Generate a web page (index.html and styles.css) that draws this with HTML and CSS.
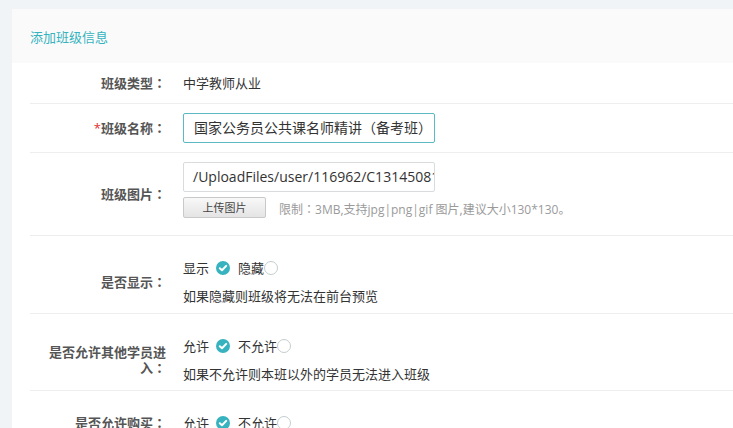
FILE: index.html
```html
<!DOCTYPE html>
<html lang="zh-CN">
<head>
<meta charset="utf-8">
<title>添加班级信息</title>
<link rel="stylesheet" href="styles.css">
</head>
<body>
<div class="card">
  <div class="card-head">添加班级信息</div>
  <div class="card-body">
    <div class="row row-text">
      <div class="label">班级类型<span class="colon" lang="zh-TW">：</span></div>
      <div class="value">中学教师从业</div>
    </div>
    <div class="row row-input">
      <div class="label"><span class="req">*</span>班级名称<span class="colon" lang="zh-TW">：</span></div>
      <div class="value"><div class="input focus">国家公务员公共课名师精讲（备考班）</div></div>
    </div>
    <div class="row row-upload">
      <div class="label">班级图片<span class="colon" lang="zh-TW">：</span></div>
      <div class="value">
        <div class="input latin">/UploadFiles/user/116962/C13145081</div>
        <div class="upload-line">
          <button class="btn">上传图片</button>
          <span class="limit">限制<span class="colon" lang="zh-TW">：</span>3MB,支持jpg|png|gif 图片,建议大小130*130。</span>
        </div>
      </div>
    </div>
    <div class="row row-radio">
      <div class="label">是否显示<span class="colon" lang="zh-TW">：</span></div>
      <div class="value">
        <div class="radios">
          <span class="opt">显示</span><span class="radio on"><svg viewBox="0 0 14 14" width="14" height="14"><circle cx="7" cy="7" r="7" fill="#36b3bf"/><path d="M3.8 7.2 L6 9.3 L10.2 4.9" fill="none" stroke="#fff" stroke-width="2" stroke-linecap="round" stroke-linejoin="round"/></svg></span>
          <span class="opt">隐藏</span><span class="radio off"></span>
        </div>
        <div class="hint">如果隐藏则班级将无法在前台预览</div>
      </div>
    </div>
    <div class="row row-radio tight">
      <div class="label">是否允许其他学员进入<span class="colon" lang="zh-TW">：</span></div>
      <div class="value">
        <div class="radios">
          <span class="opt">允许</span><span class="radio on"><svg viewBox="0 0 14 14" width="14" height="14"><circle cx="7" cy="7" r="7" fill="#36b3bf"/><path d="M3.8 7.2 L6 9.3 L10.2 4.9" fill="none" stroke="#fff" stroke-width="2" stroke-linecap="round" stroke-linejoin="round"/></svg></span>
          <span class="opt">不允许</span><span class="radio off"></span>
        </div>
        <div class="hint">如果不允许则本班以外的学员无法进入班级</div>
      </div>
    </div>
    <div class="row row-radio last">
      <div class="label">是否允许购买<span class="colon" lang="zh-TW">：</span></div>
      <div class="value">
        <div class="radios">
          <span class="opt">允许</span><span class="radio on"><svg viewBox="0 0 14 14" width="14" height="14"><circle cx="7" cy="7" r="7" fill="#36b3bf"/><path d="M3.8 7.2 L6 9.3 L10.2 4.9" fill="none" stroke="#fff" stroke-width="2" stroke-linecap="round" stroke-linejoin="round"/></svg></span>
          <span class="opt">不允许</span><span class="radio off"></span>
        </div>
      </div>
    </div>
  </div>
</div>
</body>
</html>
```
FILE: styles.css
```css
* { box-sizing: border-box; }
html, body { margin: 0; padding: 0; }
body {
  background: #f0f4f7;
  font-family: "Open Sans", "Noto Sans CJK SC", sans-serif;
  font-size: 13px;
  color: #333;
  padding: 9px 0 0 12px;
  overflow: hidden;
  height: 428px;
}
.card {
  background: #fff;
  width: 760px;
  min-height: 500px;
}
.card-head {
  height: 54px;
  background: #fafafa;
  color: #36b3bf;
  font-size: 13px;
  line-height: 56px;
  padding-left: 18px;
}
.card-body { padding-left: 18px; }
.row {
  display: flex;
  align-items: center;
  border-bottom: 1px solid #eeeeee;
}
.row.last { border-bottom: none; }
.label {
  width: 136px;
  flex: none;
  padding-left: 16px;
  text-align: right;
  font-weight: bold;
  color: #555;
  line-height: 16px;
}
.colon { font-family: "Noto Sans CJK TC", "Noto Sans CJK SC", sans-serif; }
.req { color: #e0302f; font-weight: normal; }
.value { margin-left: 17px; line-height: 20px; }
.row-text { height: 41px; }
.row-input { height: 49px; }
.row-upload { padding: 9px 0 15px; }
.row-upload .label { padding-top: 6px; }
.input {
  width: 252px;
  height: 30px;
  border: 1px solid #d9dcde;
  border-radius: 2px;
  padding: 0 10px;
  font-size: 14px;
  line-height: 28px;
  white-space: nowrap;
  overflow: hidden;
  color: #333;
}
.input.focus { border-color: #5ab9c2; }
.input.latin { font-size: 14px; padding-left: 9px; }
.upload-line {
  display: flex;
  align-items: center;
  margin-top: 3px;
}
.btn {
  width: 83px;
  height: 21px;
  border: 1px solid #c9c9c9;
  border-radius: 2px;
  background: linear-gradient(#f8f8f8, #e4e4e4);
  font-family: "Noto Sans CJK SC", sans-serif;
  font-size: 11px;
  color: #444;
  padding: 0;
  line-height: 19px;
}
.limit {
  margin-left: 13px;
  color: #9a9a9a;
  font-size: 12px;
  margin-top: 4px;
}
.row-radio { padding: 21px 0 7px; }
.row-radio.tight { padding-bottom: 6px; }
.row-radio.last { padding-bottom: 20px; }
.radios {
  display: flex;
  align-items: center;
  height: 22px;
}
.opt { line-height: 22px; }
.radio { display: inline-flex; width: 14px; height: 14px; }
.radio.on { margin: 0 8px 0 7px; }
.radio.off {
  border: 1.5px solid #c5cdcf;
  border-radius: 50%;
  width: 14px;
  height: 14px;
}
.hint { margin-top: 7px; line-height: 20px; color: #333; }
```
